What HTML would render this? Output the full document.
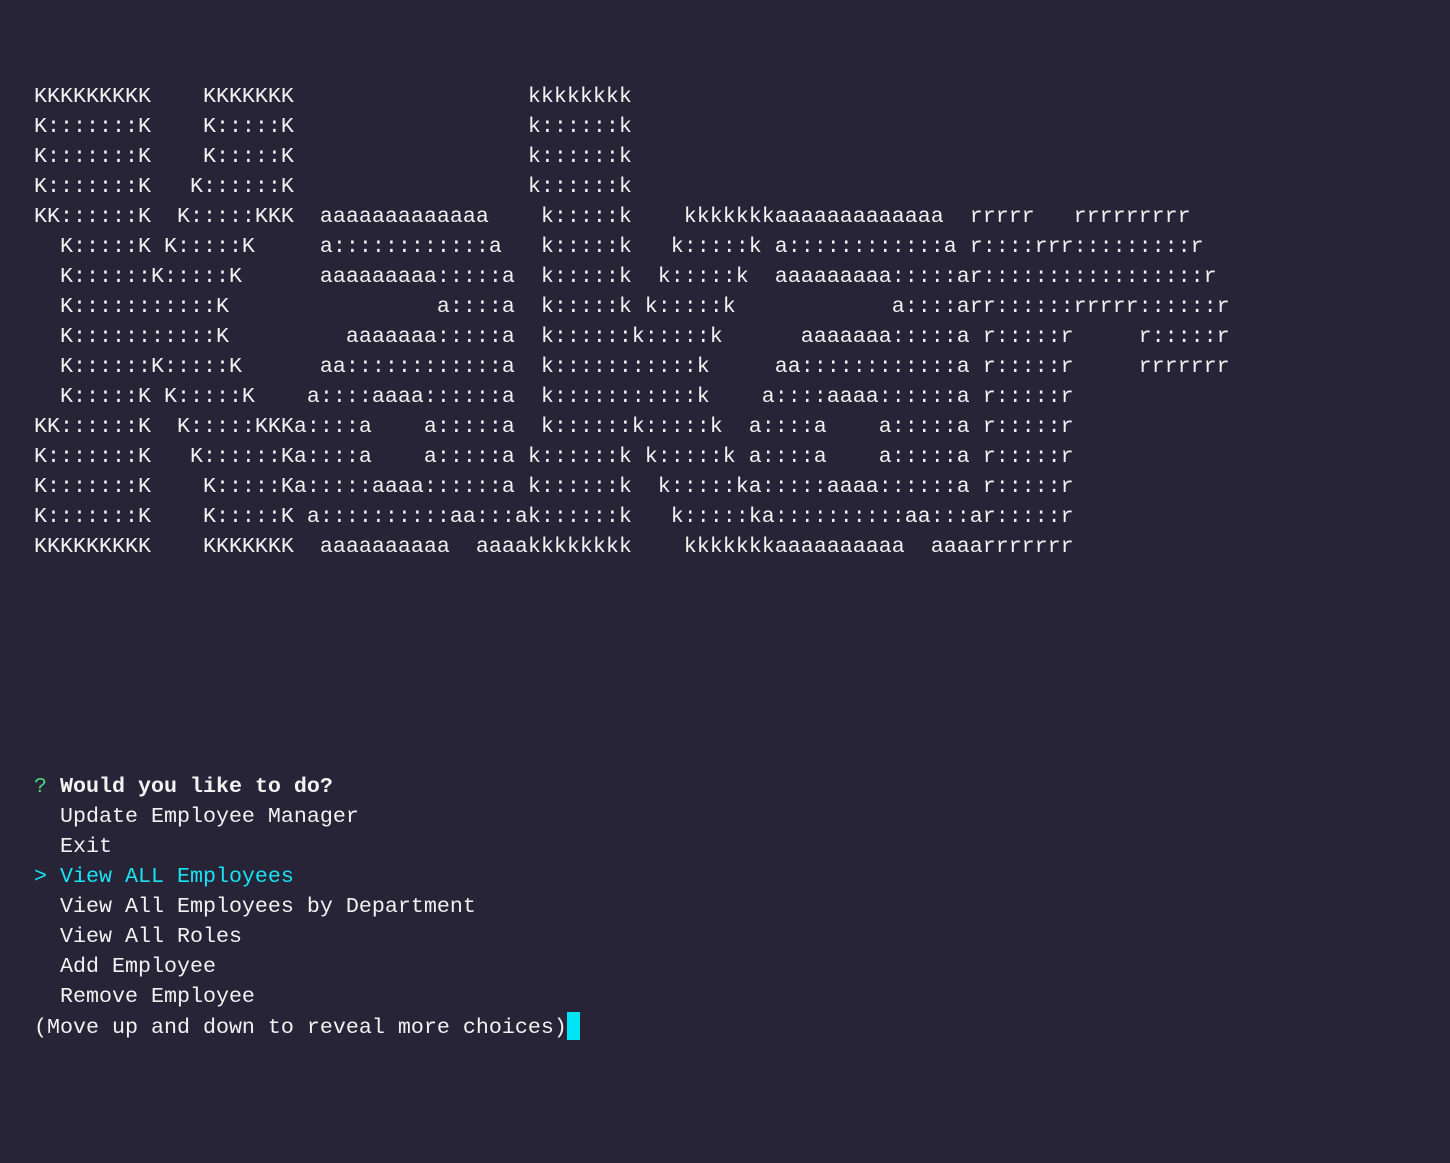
<!DOCTYPE html>
<html><head><meta charset="utf-8"><style>
html,body{margin:0;padding:0;background:#262436;}
body{width:1450px;height:1163px;overflow:hidden;}
pre{position:absolute;left:34px;top:82px;margin:0;font-family:"Liberation Mono",monospace;font-size:21.67px;line-height:30px;color:#f2f2f2;white-space:pre;}
.g{color:#4fd67f}.c{color:#19e3f2}.b{font-weight:bold}
.cur{display:inline-block;width:13px;height:28px;background:#00e5f5;vertical-align:-7px;}
</style></head><body><pre>KKKKKKKKK    KKKKKKK                  kkkkkkkk
K:::::::K    K:::::K                  k::::::k
K:::::::K    K:::::K                  k::::::k
K:::::::K   K::::::K                  k::::::k
KK::::::K  K:::::KKK  aaaaaaaaaaaaa    k:::::k    kkkkkkkaaaaaaaaaaaaa  rrrrr   rrrrrrrrr
  K:::::K K:::::K     a::::::::::::a   k:::::k   k:::::k a::::::::::::a r::::rrr:::::::::r
  K::::::K:::::K      aaaaaaaaa:::::a  k:::::k  k:::::k  aaaaaaaaa:::::ar:::::::::::::::::r
  K:::::::::::K                a::::a  k:::::k k:::::k            a::::arr::::::rrrrr::::::r
  K:::::::::::K         aaaaaaa:::::a  k::::::k:::::k      aaaaaaa:::::a r:::::r     r:::::r
  K::::::K:::::K      aa::::::::::::a  k:::::::::::k     aa::::::::::::a r:::::r     rrrrrrr
  K:::::K K:::::K    a::::aaaa::::::a  k:::::::::::k    a::::aaaa::::::a r:::::r
KK::::::K  K:::::KKKa::::a    a:::::a  k::::::k:::::k  a::::a    a:::::a r:::::r
K:::::::K   K::::::Ka::::a    a:::::a k::::::k k:::::k a::::a    a:::::a r:::::r
K:::::::K    K:::::Ka:::::aaaa::::::a k::::::k  k:::::ka:::::aaaa::::::a r:::::r
K:::::::K    K:::::K a::::::::::aa:::ak::::::k   k:::::ka::::::::::aa:::ar:::::r
KKKKKKKKK    KKKKKKK  aaaaaaaaaa  aaaakkkkkkkk    kkkkkkkaaaaaaaaaa  aaaarrrrrrr







<span class="g">?</span> <span class="b">Would you like to do?</span>
  Update Employee Manager
  Exit
<span class="c">&gt; View ALL Employees</span>
  View All Employees by Department
  View All Roles
  Add Employee
  Remove Employee
(Move up and down to reveal more choices)<span class="cur"></span></pre></body></html>
